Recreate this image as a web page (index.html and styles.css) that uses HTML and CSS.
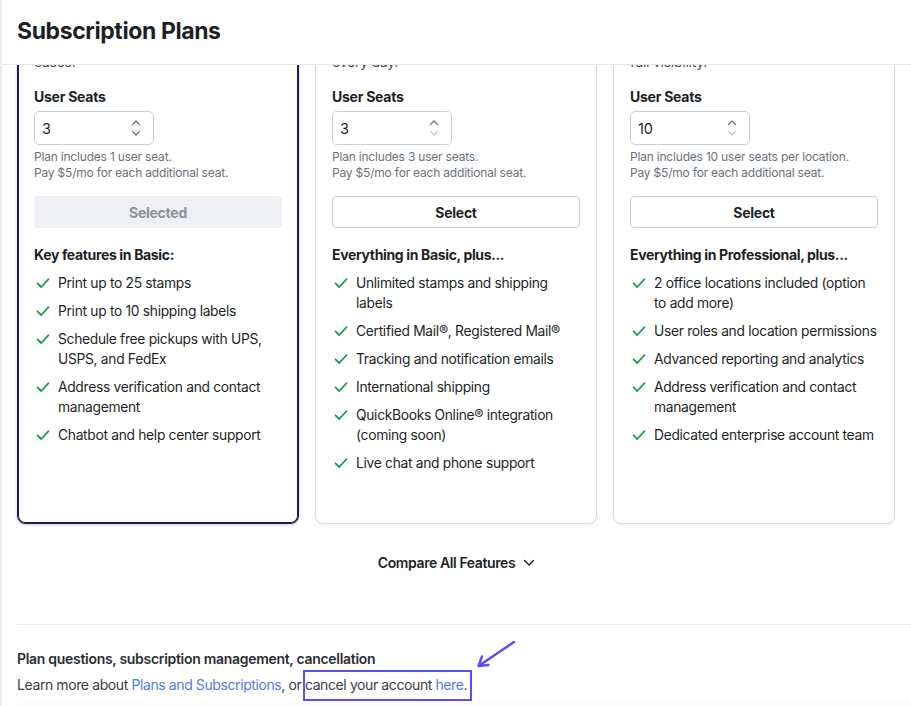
FILE: index.html
```html
<!DOCTYPE html>
<html lang="en">
<head>
    <meta charset="UTF-8">
    <meta name="viewport" content="width=device-width, initial-scale=1.0">
    <title>Subscription Plans</title>
    <link rel="stylesheet" href="styles.css">
</head>
<body>
    <div class="app">
        <header class="top-bar">
            <h1>Subscription Plans</h1>
        </header>

        <main class="content">
            <div class="plans">
                <!-- Basic (current plan) -->
                <section class="plan plan--current">
                    <p class="plan-blurb">Simple tools for occasional mailing<br>cases.</p>
                    <div class="seats-label">User Seats</div>
                    <div class="seat-input">
                        <span>3</span>
                        <svg class="spinner" viewBox="0 0 10 18" width="10" height="18">
                            <path class="up" d="M1.5 5.5L5 2l3.5 3.5"/>
                            <path class="down" d="M1.5 12.5L5 16l3.5-3.5"/>
                        </svg>
                    </div>
                    <p class="seat-note">Plan includes 1 user seat.<br>Pay $5/mo for each additional seat.</p>
                    <button class="plan-button is-selected">Selected</button>
                    <h3 class="features-title">Key features in Basic:</h3>
                    <ul class="features">
                        <li><svg class="check" viewBox="0 0 14 12"><path d="M1.5 6.3l3.7 3.7L12.5 2.2"/></svg>Print up to 25 stamps</li>
                        <li><svg class="check" viewBox="0 0 14 12"><path d="M1.5 6.3l3.7 3.7L12.5 2.2"/></svg>Print up to 10 shipping labels</li>
                        <li><svg class="check" viewBox="0 0 14 12"><path d="M1.5 6.3l3.7 3.7L12.5 2.2"/></svg>Schedule free pickups with UPS, USPS, and FedEx</li>
                        <li><svg class="check" viewBox="0 0 14 12"><path d="M1.5 6.3l3.7 3.7L12.5 2.2"/></svg>Address verification and contact management</li>
                        <li><svg class="check" viewBox="0 0 14 12"><path d="M1.5 6.3l3.7 3.7L12.5 2.2"/></svg>Chatbot and help center support</li>
                    </ul>
                </section>

                <!-- Professional -->
                <section class="plan">
                    <p class="plan-blurb">For growing teams that ship<br>every day.</p>
                    <div class="seats-label">User Seats</div>
                    <div class="seat-input">
                        <span>3</span>
                        <svg class="spinner at-min" viewBox="0 0 10 18" width="10" height="18">
                            <path class="up" d="M1.5 5.5L5 2l3.5 3.5"/>
                            <path class="down" d="M1.5 12.5L5 16l3.5-3.5"/>
                        </svg>
                    </div>
                    <p class="seat-note">Plan includes 3 user seats.<br>Pay $5/mo for each additional seat.</p>
                    <button class="plan-button">Select</button>
                    <h3 class="features-title">Everything in Basic, plus...</h3>
                    <ul class="features">
                        <li><svg class="check" viewBox="0 0 14 12"><path d="M1.5 6.3l3.7 3.7L12.5 2.2"/></svg>Unlimited stamps and shipping labels</li>
                        <li><svg class="check" viewBox="0 0 14 12"><path d="M1.5 6.3l3.7 3.7L12.5 2.2"/></svg>Certified Mail®, Registered Mail®</li>
                        <li><svg class="check" viewBox="0 0 14 12"><path d="M1.5 6.3l3.7 3.7L12.5 2.2"/></svg>Tracking and notification emails</li>
                        <li><svg class="check" viewBox="0 0 14 12"><path d="M1.5 6.3l3.7 3.7L12.5 2.2"/></svg>International shipping</li>
                        <li><svg class="check" viewBox="0 0 14 12"><path d="M1.5 6.3l3.7 3.7L12.5 2.2"/></svg>QuickBooks Online® integration (coming soon)</li>
                        <li><svg class="check" viewBox="0 0 14 12"><path d="M1.5 6.3l3.7 3.7L12.5 2.2"/></svg>Live chat and phone support</li>
                    </ul>
                </section>

                <!-- Enterprise -->
                <section class="plan">
                    <p class="plan-blurb">Multiple offices, one account,<br>full visibility.</p>
                    <div class="seats-label">User Seats</div>
                    <div class="seat-input">
                        <span>10</span>
                        <svg class="spinner at-min" viewBox="0 0 10 18" width="10" height="18">
                            <path class="up" d="M1.5 5.5L5 2l3.5 3.5"/>
                            <path class="down" d="M1.5 12.5L5 16l3.5-3.5"/>
                        </svg>
                    </div>
                    <p class="seat-note">Plan includes 10 user seats per location.<br>Pay $5/mo for each additional seat.</p>
                    <button class="plan-button">Select</button>
                    <h3 class="features-title">Everything in Professional, plus...</h3>
                    <ul class="features">
                        <li><svg class="check" viewBox="0 0 14 12"><path d="M1.5 6.3l3.7 3.7L12.5 2.2"/></svg>2 office locations included (option to add more)</li>
                        <li><svg class="check" viewBox="0 0 14 12"><path d="M1.5 6.3l3.7 3.7L12.5 2.2"/></svg>User roles and location permissions</li>
                        <li><svg class="check" viewBox="0 0 14 12"><path d="M1.5 6.3l3.7 3.7L12.5 2.2"/></svg>Advanced reporting and analytics</li>
                        <li><svg class="check" viewBox="0 0 14 12"><path d="M1.5 6.3l3.7 3.7L12.5 2.2"/></svg>Address verification and contact management</li>
                        <li><svg class="check" viewBox="0 0 14 12"><path d="M1.5 6.3l3.7 3.7L12.5 2.2"/></svg>Dedicated enterprise account team</li>
                    </ul>
                </section>
            </div>

            <div class="compare">
                <button class="compare-toggle">
                    Compare All Features
                    <svg class="chevron" viewBox="0 0 12 8" width="12" height="8"><path d="M1.5 1.5L6 6l4.5-4.5"/></svg>
                </button>
            </div>

            <div class="help">
                <h4>Plan questions, subscription management, cancellation</h4>
                <p>Learn more about <a href="#">Plans and Subscriptions</a>, or <span class="callout">cancel your account <a href="#">here</a>.<svg class="callout-arrow" viewBox="0 0 42 30" width="42" height="30"><path d="M39 2L3.5 26M3.5 26l10-1M3.5 26l3.5-9.5"/></svg></span></p>
            </div>
        </main>
    </div>
</body>
</html>
```

FILE: styles.css
```css
:root {
    --text: #1d1f24;
    --muted: #6c717a;
    --line: #d6d9df;
    --navy: #1d1b4b;
    --green: #1e9a52;
    --link: #4f7de6;
    --callout: #5a4ff2;
}

* {
    box-sizing: border-box;
}

body, html {
    margin: 0;
    padding: 0;
    height: 100%;
    font-family: 'Inter', 'Liberation Sans', sans-serif;
    font-size: 14px;
    letter-spacing: -0.25px;
    color: var(--text);
    background: #fff;
    overflow: hidden;
}

.app {
    height: 100%;
    display: flex;
    flex-direction: column;
    border-left: 2px solid #eceef1;
}

.top-bar {
    height: 65px;
    flex-shrink: 0;
    display: flex;
    align-items: center;
    padding: 0 15px;
    border-bottom: 1px solid #e4e6ea;
    background: #fff;
    position: relative;
    z-index: 1;
}

.top-bar h1 {
    margin: 0 0 2px;
    font-size: 23px;
    font-weight: 700;
    letter-spacing: -0.4px;
}

.content {
    flex: 1;
    overflow: hidden;
}

/* cards are scrolled partly under the header */
.plans {
    margin-top: -50px;
    padding: 0 16px 0 15px;
    display: grid;
    grid-template-columns: repeat(3, minmax(0, 1fr));
    gap: 16px;
}

.plan {
    min-width: 0;
    border: 1px solid var(--line);
    border-radius: 8px;
    padding: 16px 16px 50px;
    box-shadow: 0 1px 2px rgba(20, 24, 40, 0.08);
}

.plan--current {
    border-color: var(--navy);
    box-shadow: inset 0 0 0 1px var(--navy), 0 1px 3px rgba(20, 24, 40, 0.2);
}

.plan-blurb {
    margin: 0;
    line-height: 20px;
    white-space: nowrap;
    overflow: hidden;
    color: #4a4e56;
}

.seats-label {
    margin-top: 15px;
    font-weight: 700;
    line-height: 20px;
}

.seat-input {
    margin-top: 4px;
    width: 120px;
    height: 34px;
    border: 1px solid #c9cdd4;
    border-radius: 5px;
    display: flex;
    align-items: center;
    justify-content: space-between;
    padding: 0 12px 0 7px;
    font-size: 14.5px;
}

.spinner path {
    fill: none;
    stroke: #6c717a;
    stroke-width: 1.2;
    stroke-linecap: round;
    stroke-linejoin: round;
}

.spinner.at-min .down {
    stroke: #c3c7cd;
}

.seat-note {
    margin: 4px 0 0;
    font-size: 12px;
    line-height: 16px;
    letter-spacing: -0.2px;
    color: var(--muted);
}

.plan-button {
    display: block;
    width: 100%;
    height: 32px;
    margin-top: 15px;
    border: 1px solid #c9cdd4;
    border-radius: 4px;
    background: #fff;
    font-family: inherit;
    font-size: 14px;
    font-weight: 700;
    letter-spacing: -0.25px;
    color: var(--text);
    cursor: pointer;
}

.plan-button.is-selected {
    border-color: #eef0f3;
    background: #eef0f3;
    color: #8c9199;
    cursor: default;
}

.features-title {
    margin: 17px 0 0;
    font-size: 14px;
    font-weight: 700;
    line-height: 20px;
    letter-spacing: -0.35px;
}

.features {
    list-style: none;
    margin: 8px 0 0;
    padding: 0;
    display: flex;
    flex-direction: column;
    gap: 8px;
}

.features li {
    display: grid;
    grid-template-columns: 24px 1fr;
    font-size: 13.8px;
    letter-spacing: -0.3px;
    line-height: 20px;
}

.check {
    width: 14px;
    height: 12px;
    margin: 4px 0 0 2px;
}

.check path {
    fill: none;
    stroke: var(--green);
    stroke-width: 1.8;
    stroke-linecap: round;
    stroke-linejoin: round;
}

.compare {
    margin-top: 29px;
    display: flex;
    justify-content: center;
}

.compare-toggle {
    display: flex;
    align-items: center;
    gap: 8px;
    padding: 0;
    border: none;
    background: none;
    font-family: inherit;
    font-size: 14px;
    font-weight: 600;
    letter-spacing: -0.4px;
    line-height: 20px;
    color: var(--text);
    cursor: pointer;
}

.chevron path {
    fill: none;
    stroke: var(--text);
    stroke-width: 1.4;
    stroke-linecap: round;
    stroke-linejoin: round;
}

.help {
    margin: 51px 0 0 15px;
    padding-top: 24px;
    border-top: 1px solid #eceef1;
    background: linear-gradient(to bottom, #fff 75%, #f3f4f6);
    height: 100px;
}

.help h4 {
    margin: 0;
    font-size: 14px;
    font-weight: 600;
    line-height: 20px;
    letter-spacing: -0.3px;
    color: #2b2e34;
}

.help p {
    margin: 6px 0 0;
    line-height: 20px;
    letter-spacing: -0.4px;
    color: #3a3d44;
}

.help a {
    color: var(--link);
    text-decoration: none;
}

/* outlined call-out with pointer arrow */
.callout {
    position: relative;
}

.callout::after {
    content: "";
    position: absolute;
    top: -6px;
    right: -5px;
    bottom: -8px;
    left: -2px;
    border: 2px solid var(--callout);
}

.callout-arrow {
    position: absolute;
    left: calc(100% + 8px);
    top: -36px;
}

.callout-arrow path {
    fill: none;
    stroke: var(--callout);
    stroke-width: 2.4;
    stroke-linecap: round;
    stroke-linejoin: round;
}
```
